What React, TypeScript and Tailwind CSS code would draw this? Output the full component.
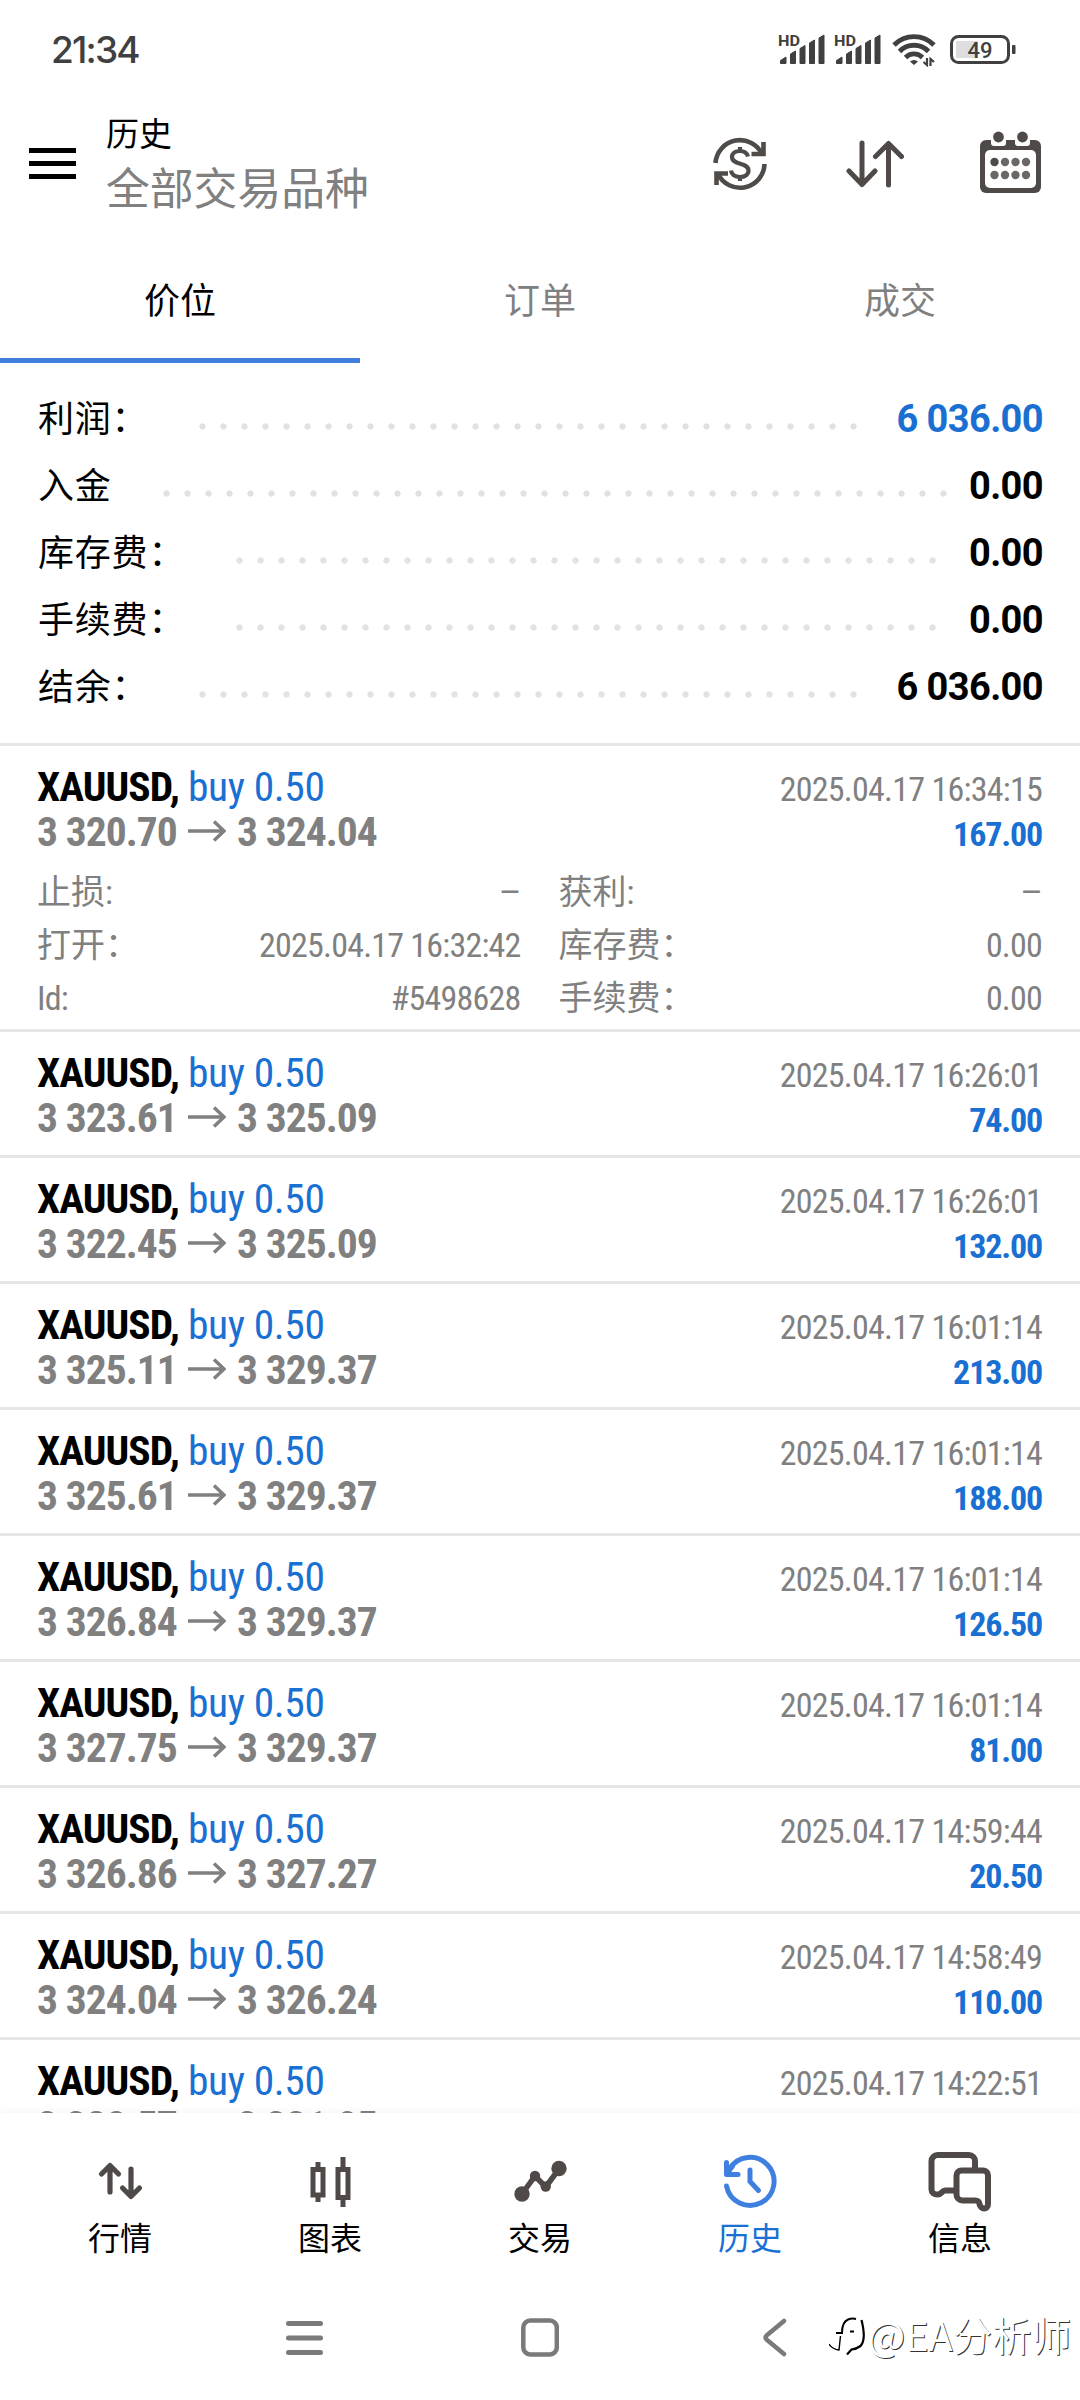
import clsx from 'clsx';

interface Trade {
  open: string;
  close: string;
  time: string;
  profit?: string;
}

const summary = [
  { label: '利润：', value: '6 036.00', dots: 32, blue: true },
  { label: '入金', value: '0.00', dots: 38 },
  { label: '库存费：', value: '0.00', dots: 34 },
  { label: '手续费：', value: '0.00', dots: 34 },
  { label: '结余：', value: '6 036.00', dots: 32 },
];

const trades: Trade[] = [
  { open: '3 320.70', close: '3 324.04', time: '2025.04.17 16:34:15', profit: '167.00' },
  { open: '3 323.61', close: '3 325.09', time: '2025.04.17 16:26:01', profit: '74.00' },
  { open: '3 322.45', close: '3 325.09', time: '2025.04.17 16:26:01', profit: '132.00' },
  { open: '3 325.11', close: '3 329.37', time: '2025.04.17 16:01:14', profit: '213.00' },
  { open: '3 325.61', close: '3 329.37', time: '2025.04.17 16:01:14', profit: '188.00' },
  { open: '3 326.84', close: '3 329.37', time: '2025.04.17 16:01:14', profit: '126.50' },
  { open: '3 327.75', close: '3 329.37', time: '2025.04.17 16:01:14', profit: '81.00' },
  { open: '3 326.86', close: '3 327.27', time: '2025.04.17 14:59:44', profit: '20.50' },
  { open: '3 324.04', close: '3 326.24', time: '2025.04.17 14:58:49', profit: '110.00' },
  { open: '3 328.57', close: '3 331.05', time: '2025.04.17 14:22:51' },
];

const details = [
  [{ label: '止损:', value: '–' }, { label: '获利:', value: '–' }],
  [{ label: '打开：', value: '2025.04.17 16:32:42' }, { label: '库存费：', value: '0.00' }],
  [{ label: 'Id:', value: '#5498628' }, { label: '手续费：', value: '0.00' }],
];

function Signal() {
  return (
    <svg width="48" height="32" viewBox="0 0 48 32" fill="#404040">
      <text x="0" y="12" fontSize="14.500" fontWeight="700" textLength="22" lengthAdjust="spacingAndGlyphs" fontFamily="Roboto, sans-serif">HD</text>
      <path d="M2.500 29.500v-3l5.500-3.500v6.500zM12.500 29.500V20l5-3v12.500zM22 29.500V14.500l5-3v18zM31.500 29.500V9l5-3v23.500zM41 29.500V4l5-3v28.500z" stroke="#404040" strokeWidth="1" strokeLinejoin="round" />
    </svg>
  );
}

function StatusBar() {
  return (
    <div className="flex h-[100px] items-center justify-between pl-[51px] pr-[63px]">
      <span className="font-['Inter'] text-[37px] font-medium tracking-[-1.8px] text-[#404040]">21:34</span>
      <div className="flex items-center">
        <Signal />
        <span className="w-2" />
        <Signal />
        <svg className="ml-[10px]" width="44" height="34" viewBox="0 0 44 34" fill="none" stroke="#404040" strokeWidth="4.800">
          <path d="M2 12a28 28 0 0 1 40 0M7.500 18.500a20 20 0 0 1 29 0M13.500 24.500a12 12 0 0 1 17 0" />
          <path d="M18 28.500q4-3 8 0l-4 3.500z" fill="#404040" stroke="none" />
          <path d="M35 25v7l-3.500-3M38.500 33v-7l3.500 3" strokeWidth="2.200" />
        </svg>
        <svg className="ml-[14px]" width="67" height="30" viewBox="0 0 67 30">
          <rect x="6" y="6" width="22" height="17" fill="#dedede" />
          <rect x="1.500" y="1.500" width="57" height="26" rx="7" fill="none" stroke="#404040" strokeWidth="3" />
          <rect x="62" y="10" width="3.500" height="9" rx="1" fill="#404040" />
          <text x="30" y="22.500" textAnchor="middle" fontSize="22" fontWeight="500" fill="#404040" fontFamily="Roboto, sans-serif">49</text>
        </svg>
      </div>
    </div>
  );
}

function Header() {
  return (
    <header className="flex h-[139px] items-start pl-[29px] pr-[38px]">
      <svg className="mt-[48px]" width="47" height="31" viewBox="0 0 47 31">
        <path d="M0 2.500h47M0 15.500h47M0 28.500h47" stroke="#000" strokeWidth="5" />
      </svg>
      <div className="ml-[30px] flex-1 pt-[14px]">
        <h1 className="text-[33px] leading-[42px] text-black">历史</h1>
        <p className="mt-[4px] text-[43.800px] leading-[60px] text-[#808080]">全部交易品种</p>
      </div>
      <div className="flex items-start pt-[30px]">
        <svg className="mt-[6px]" width="54" height="56" viewBox="0 0 54 56" fill="none" stroke="#4f4b49" strokeWidth="4.600">
          <path d="M2.500 27A24.500 24.500 0 0 1 49 18M51.500 28A24.500 24.500 0 0 1 5 38" />
          <path d="M50.500 6v12H38.500M3.500 49V37.500H15" />
          <path d="M35 20.500c-1-3.500-4-5.500-8-5.500-5 0-8 2.500-8 6 0 8.500 16.500 5 16.500 13.500 0 4-3.500 6.500-8.500 6.500s-8.500-2.500-9-6.500M27 11v4M27 41v4" strokeWidth="4.200" />
        </svg>
        <svg className="ml-[79px] mt-[10px]" width="58" height="48" viewBox="0 0 58 48" fill="none" stroke="#4f4a48" strokeWidth="5" strokeLinecap="round" strokeLinejoin="round">
          <path d="M16 3v41M3 31l13 13.500L29 31M42.500 45V4M29.500 16.500L42.500 3.500l13 13" />
        </svg>
        <svg className="ml-[76px]" width="62" height="64" viewBox="0 0 62 64">
          <rect x="0" y="10" width="61" height="53" rx="6" fill="#4f4a48" />
          <rect x="5" y="20" width="51" height="38" rx="5" fill="#fff" />
          <path d="M11 0h15v13a3 3 0 0 1-3 3h-9a3 3 0 0 1-3-3zM35 0h15v13a3 3 0 0 1-3 3h-9a3 3 0 0 1-3-3z" fill="#fff" />
          <circle cx="18.500" cy="7" r="5.400" fill="#4f4a48" />
          <circle cx="42.500" cy="7" r="5.400" fill="#4f4a48" />
          {[14.5, 25, 35.5, 46].map((cx, i) => (
            <g key={cx} fill="#6b6765">
              <circle cx={cx} cy="32" r="4.200" fill={i === 0 ? '#4f4a48' : '#6b6765'} />
              <circle cx={cx} cy="45" r="4.200" />
            </g>
          ))}
        </svg>
      </div>
    </header>
  );
}

function Tabs() {
  return (
    <nav className="flex h-[124px] text-[36px]">
      {['价位', '订单', '成交'].map((tab, i) => (
        <div
          key={tab}
          className={clsx(
            'flex flex-1 justify-center border-b-[5px] pt-[36px] leading-[54px]',
            i === 0 ? 'border-[#3f7fdb] text-black' : 'border-transparent text-[#808080]',
          )}
        >
          {tab}
        </div>
      ))}
    </nav>
  );
}

function Summary() {
  return (
    <section className="h-[380px] pl-[38px] pr-[37px] pt-[23px]">
      {summary.map(row => (
        <div key={row.label} className="flex h-[67px] items-center">
          <span className="text-[36px] tracking-[0.8px] text-black">{row.label}</span>
          <span
            className="ml-[44px] mt-[13px] h-[7px] shrink-0 bg-[radial-gradient(circle,#e2e2e2_2.8px,transparent_3.5px)] bg-[length:21px_7px]"
            style={{ width: row.dots * 21 }}
          />
          <span
            className={clsx(
              'ml-auto text-[38px] font-bold tracking-[-0.6px] whitespace-nowrap',
              row.blue ? 'text-[#1a70d2]' : 'text-black',
            )}
          >
            {row.value}
          </span>
        </div>
      ))}
    </section>
  );
}

function Details() {
  return (
    <div className="pt-[11px] text-[34px] text-[#808080]">
      {details.map((row, i) => (
        <div key={i} className="flex h-[53px] items-center gap-[38px]">
          {row.map(cell => (
            <div key={cell.label} className="flex flex-1 items-center justify-between">
              <span className={clsx(cell.label === 'Id:' && "font-['Roboto_Condensed'] tracking-[-0.8px]")}>{cell.label}</span>
              <span className={clsx('tracking-[-0.8px] whitespace-nowrap', cell.value !== '–' && "font-['Roboto_Condensed']")}>
                {cell.value}
              </span>
            </div>
          ))}
        </div>
      ))}
    </div>
  );
}

function TradeRow({ trade, open }: { trade: Trade; open?: boolean }) {
  return (
    <li className={clsx('shrink-0 border-t-[3px] border-[#e6e6e6] pl-[37px] pr-[38px] pt-[19px]', open ? 'h-[286px]' : 'h-[126px]')}>
      <div className="flex justify-between font-['Roboto_Condensed'] whitespace-nowrap">
        <div className="flex flex-col text-[41.500px]">
          <div className="flex h-[45px] items-center">
            <span className="w-[151px] font-bold tracking-[-0.95px] text-black">XAUUSD,</span>
            <span className="tracking-[-0.4px] text-[#1a70d2]">buy 0.50</span>
          </div>
          <div className="flex h-[45px] items-center font-bold tracking-[-0.95px] text-[#808080]">
            <span className="w-[151px]">{trade.open}</span>
            <svg className="mb-1" width="38" height="22" viewBox="0 0 38 22" fill="none" stroke="#808080" strokeWidth="3.500">
              <path d="M0 11h36M26 1.500L36 11 26 20.500" />
            </svg>
            <span className="ml-[11px]">{trade.close}</span>
          </div>
        </div>
        <div className="flex flex-col items-end text-[34px]">
          <span className="h-[49px] leading-[49px] tracking-[-0.75px] text-[#808080]">{trade.time}</span>
          {trade.profit && (
            <span className="h-[41px] leading-[41px] font-bold tracking-[-1.15px] text-[#1a70d2]">{trade.profit}</span>
          )}
        </div>
      </div>
      {open && <Details />}
    </li>
  );
}

const tabs = [
  {
    label: '行情',
    icon: (
      <path d="M20 38V12M11.500 20l8.500-8.500L28.500 20M41 15v27M32.500 34l8.500 8.500L49.500 34" strokeWidth="5.200" strokeLinecap="round" strokeLinejoin="round" />
    ),
  },
  {
    label: '图表',
    icon: (
      <path d="M18 8v7M18 41v7M43 3v10M43 44v9M13 15.500h10v25.500H13zM38 15.500h10v28H38z" strokeWidth="5" />
    ),
  },
  {
    label: '交易',
    icon: (
      <>
        <path d="M12 40L25 22l10.700 11L49 15" strokeWidth="5.500" />
        <g fill="#4f4a48" stroke="none">
          <circle cx="12" cy="40" r="7.700" />
          <circle cx="25" cy="22" r="5.200" />
          <circle cx="35.700" cy="32.500" r="5.200" />
          <circle cx="49" cy="14.500" r="7.700" />
        </g>
      </>
    ),
  },
  {
    label: '历史',
    active: true,
    icon: (
      <g strokeWidth="5" strokeLinecap="round">
        <path d="M6.500 32A24 24 0 1 0 9.500 15" />
        <path d="M6.500 8.500v12h11.500M7.500 19l5-7" strokeLinejoin="round" />
        <path d="M30 16v11.500l8.500 9" />
      </g>
    ),
  },
  {
    label: '信息',
    icon: (
      <g strokeWidth="6" strokeLinejoin="round">
        <path d="M25 36.500H15c-3 0-3.500 4-7.500 4-3.500 0-6-2-6-5V7a6 6 0 0 1 6-6H39a6 6 0 0 1 6 6v9" />
        <path d="M31.500 16.500H53a5 5 0 0 1 5 5V50c0 6-7.500 6-8.500 0-.5-3-1.500-3.500-4.500-3.500H32.500a6 6 0 0 1-6-6v-19a5 5 0 0 1 5-5z" />
      </g>
    ),
  },
];

function BottomNav() {
  return (
    <nav className="relative flex h-[160px] bg-white px-[15px] shadow-[0_-2px_6px_rgba(0,0,0,0.04)]">
      {tabs.map(tab => (
        <div key={tab.label} className="flex flex-1 flex-col items-center pt-[41px]">
          <svg className="overflow-visible" width="60" height="56" viewBox="0 0 60 56" fill="none" stroke={tab.active ? '#3f7fe0' : '#4f4a48'}>
            {tab.icon}
          </svg>
          <span className={clsx('mt-[6px] text-[32px] leading-[46px]', tab.active ? 'text-[#1a70d2]' : 'text-black')}>
            {tab.label}
          </span>
        </div>
      ))}
    </nav>
  );
}

function SystemBar() {
  return (
    <div className="relative flex h-[127px] justify-center bg-white pt-[45px]">
      <svg className="mr-[198px]" width="37" height="40" viewBox="0 0 37 40" stroke="#7a7a7a" strokeWidth="5" strokeLinecap="round">
        <path d="M2.500 5.500h32M2.500 20h32M2.500 34.500h32" />
      </svg>
      <svg width="38" height="40" viewBox="0 0 38 40" fill="none" stroke="#7a7a7a" strokeWidth="4.500">
        <rect x="2.300" y="2.500" width="33.500" height="34" rx="7" />
      </svg>
      <svg className="ml-[203px] mr-[-5px]" width="37" height="40" viewBox="0 0 37 40" fill="none" stroke="#7a7a7a" strokeWidth="4.500" strokeLinecap="round" strokeLinejoin="round">
        <path d="M22 3L4.500 17.500q-2 2 0 4L22 36" />
      </svg>
      <div className="absolute right-[9px] top-[36px] flex items-center">
        <svg width="36" height="44" viewBox="0 0 36 44" fill="none" stroke="#000">
          <path d="M0 32q3 5 10 6l1.500-14" strokeWidth="1.400" />
          <path d="M7 21h6q0-11 6-13.500 4-1.500 8-.5M21 19.500h4" strokeWidth="2" />
          <path d="M32.500 8q5 20-1 26-4 3-9 3.500l-4.500 5" strokeWidth="2.200" />
        </svg>
        <span className="ml-[3px] font-['Noto_Sans_CJK_SC'] text-[39.500px] leading-[50px] text-white [text-shadow:1px_1px_0.5px_#333]">@EA分析师</span>
      </div>
    </div>
  );
}

export default function App() {
  return (
    <div lang="zh-CN" className="flex h-[2400px] w-[1080px] flex-col overflow-hidden bg-white font-['Roboto','Noto_Sans_CJK_SC',sans-serif]">
      <StatusBar />
      <Header />
      <Tabs />
      <Summary />
      <ul className="flex h-[1370px] flex-col overflow-hidden">
        {trades.map((trade, i) => (
          <TradeRow key={i} trade={trade} open={i === 0} />
        ))}
      </ul>
      <BottomNav />
      <SystemBar />
    </div>
  );
}
